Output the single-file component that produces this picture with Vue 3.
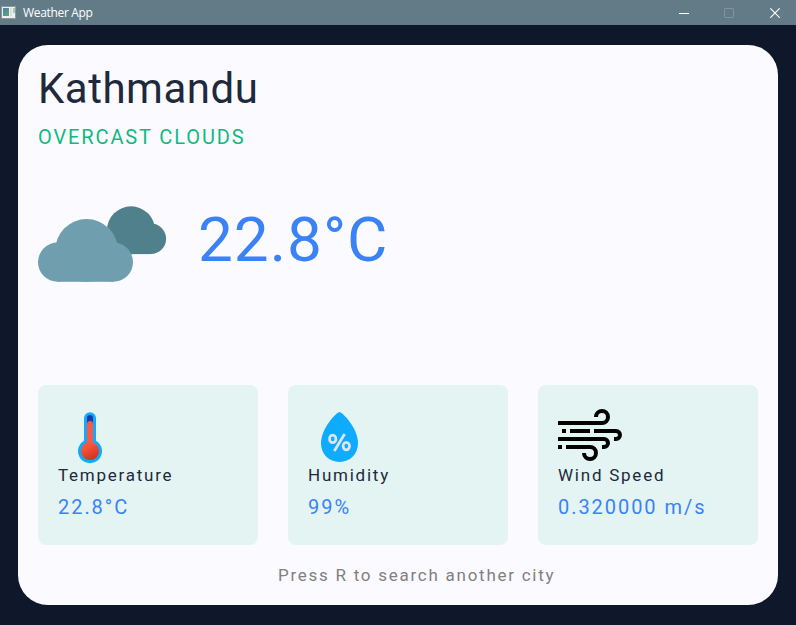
<script setup>
const city = 'Kathmandu'
const condition = 'OVERCAST CLOUDS'
const temperature = '22.8°C'
const stats = [
  { icon: 'temperature', label: 'Temperature', value: '22.8°C' },
  { icon: 'humidity', label: 'Humidity', value: '99%' },
  { icon: 'wind', label: 'Wind Speed', value: '0.320000 m/s' },
]
</script>

<template>
  <div class="window">
    <header class="titlebar">
      <svg class="app-icon" width="16" height="14" viewBox="0 0 16 14">
        <defs>
          <linearGradient id="appGlow" x1="0" y1="0" x2="0.6" y2="1">
            <stop offset="0" stop-color="#4f7fb0" />
            <stop offset="1" stop-color="#56a673" />
          </linearGradient>
        </defs>
        <rect x="1.5" y="0.5" width="14" height="12" fill="#eef0f0" stroke="#8b979d" />
        <rect x="3" y="2" width="6" height="8" fill="url(#appGlow)" />
        <rect x="10" y="2" width="2" height="8" fill="#d9dddd" />
        <rect x="13" y="2" width="2" height="5" fill="#9fcbb8" />
      </svg>
      <span class="app-name">Weather App</span>
      <div class="controls">
        <svg class="minimize" width="10" height="10" viewBox="0 0 10 10"><path d="M0 5.5H10" stroke="#fff" /></svg>
        <svg width="10" height="10" viewBox="0 0 10 10"><rect x="0.5" y="0.5" width="9" height="9" rx="0.6" fill="none" stroke="#81959f" /></svg>
        <svg width="10" height="10" viewBox="0 0 10 10"><path d="M0.3 0.3L9.7 9.7M9.7 0.3L0.3 9.7" stroke="#fff" stroke-width="1.1" /></svg>
      </div>
    </header>

    <main class="card">
      <h1 class="city">{{ city }}</h1>
      <p class="condition">{{ condition }}</p>

      <section class="current">
        <svg class="clouds" width="130" height="78" viewBox="0 0 130 78">
          <g fill="#50808c">
            <circle cx="93" cy="25.3" r="24" />
            <circle cx="112.8" cy="33.8" r="15.3" />
            <rect x="80" y="30" width="33" height="19.1" />
          </g>
          <g fill="#6f9fae">
            <circle cx="48.6" cy="45.4" r="31.4" />
            <circle cx="19.6" cy="57.2" r="19.6" />
            <circle cx="75.4" cy="57.2" r="19.6" />
            <rect x="19.6" y="50" width="55.8" height="26.8" />
          </g>
        </svg>
        <span class="reading">{{ temperature }}</span>
      </section>

      <section class="stats">
        <article v-for="s in stats" :key="s.label" class="stat">
          <svg v-if="s.icon === 'temperature'" class="icon" width="64" height="64" viewBox="0 0 64 64">
            <defs>
              <linearGradient id="mercury" x1="0.2" y1="0" x2="0.7" y2="1">
                <stop offset="0" stop-color="#ff5840" />
                <stop offset="0.3" stop-color="#f5533a" />
                <stop offset="1" stop-color="#cc301a" />
              </linearGradient>
            </defs>
            <path d="M26 13a6 6 0 0 1 12 0V35.6a12 12 0 1 1-12 0Z" fill="#0eabff" transform="translate(0 .2)" />
            <path d="M29 20V13a3 3 0 0 1 6 0V20Z" fill="#173ea8" />
            <path d="M29 40V19a3 3 0 0 1 6 0V40Z" fill="#ff5840" />
            <circle cx="32" cy="46" r="9.1" fill="url(#mercury)" />
          </svg>
          <svg v-else-if="s.icon === 'humidity'" class="icon" width="64" height="64" viewBox="0 0 64 64">
            <path d="M31.5 7C34.2 7 50 23 50 38.3C50 49.2 41.8 57 31.5 57S13 49.2 13 38.3C13 23 28.8 7 31.5 7Z" fill="#0eabff" />
            <g fill="none" stroke="#dfe5ec" stroke-width="2.7">
              <ellipse cx="24.7" cy="33.9" rx="3.2" ry="3.8" />
              <ellipse cx="38.3" cy="41.1" rx="3.2" ry="3.8" />
              <path d="M36.6 29L26.3 46" />
            </g>
          </svg>
          <svg v-else class="icon" width="64" height="64" viewBox="0 0 64 64" fill="none" stroke="#000" stroke-width="4">
            <path d="M0 18H44a6 6 0 1 0-6-6" />
            <path d="M4 26h4M12 26h20M36 26H58a4 4 0 0 1 0 8h-2" />
            <path d="M0 34H46a4 4 0 0 1 0 8h-2" />
            <path d="M0 42h4M8 42H32a6 6 0 1 1-6 6" />
          </svg>
          <div class="label">{{ s.label }}</div>
          <div class="value">{{ s.value }}</div>
        </article>
      </section>

      <footer class="hint">Press R to search another city</footer>
    </main>
  </div>
</template>

<style>
body {
  margin: 0;
  background: #0f172a;
}
</style>

<style scoped>
.window {
  box-sizing: border-box;
  width: 796px;
  height: 625px;
  overflow: hidden;
  background: #0f172a;
  font-family: Roboto, "Liberation Sans", sans-serif;
}
.titlebar {
  display: flex;
  align-items: center;
  height: 25px;
  background: #627b87;
}
.app-icon {
  display: block;
  margin-right: 7px;
}
.app-name {
  color: #fff;
  font: 12px/25px "Open Sans", "Noto Sans", sans-serif;
  letter-spacing: -0.33px;
}
.controls {
  display: flex;
  gap: 36px;
  margin-left: auto;
  padding-right: 16px;
}
.controls svg {
  display: block;
}
.controls .minimize {
  margin-right: -1px;
}
.card {
  box-sizing: border-box;
  width: 760px;
  height: 560px;
  margin: 20px 18px;
  padding: 19px 20px 0;
  border-radius: 30px;
  background: #fbfbff;
}
.city {
  margin: 0;
  color: #1e293b;
  font-size: 42px;
  font-weight: 400;
  line-height: 50px;
  letter-spacing: 0.5px;
}
.condition {
  margin: 11px 0 0;
  color: #10b981;
  font-size: 20px;
  line-height: 24px;
  letter-spacing: 1.88px;
}
.current {
  display: flex;
  gap: 30px;
  height: 80px;
  margin-top: 56px;
}
.reading {
  color: #3b82f6;
  font-size: 62px;
  line-height: 70px;
  letter-spacing: 1px;
}
.stats {
  display: grid;
  grid-template-columns: repeat(3, 220px);
  gap: 30px;
  margin-top: 100px;
}
.stat {
  box-sizing: border-box;
  height: 160px;
  padding: 20px 20px 0;
  border-radius: 8px;
  background: #e3f4f3;
}
.icon {
  display: block;
  margin-bottom: -4px;
}
.label {
  color: #1e293b;
  font-size: 17px;
  line-height: 20px;
  letter-spacing: 1.76px;
}
.value {
  margin-top: 10px;
  color: #3b82f6;
  font-size: 20px;
  line-height: 24px;
  letter-spacing: 1.95px;
}
.hint {
  margin: 20px 0 0 240px;
  color: #808080;
  font-size: 17px;
  line-height: 20px;
  letter-spacing: 1.74px;
  white-space: nowrap;
}
</style>
